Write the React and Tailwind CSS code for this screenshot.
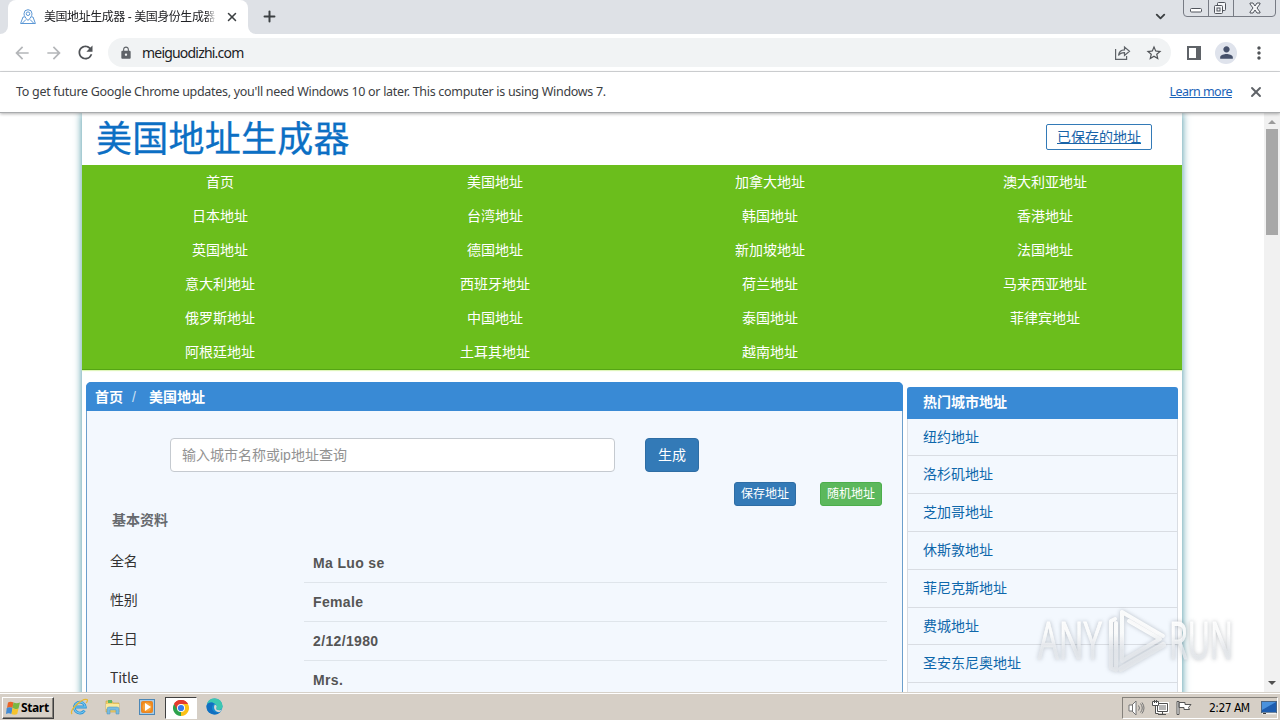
import { ChevronDown, Plus, X } from 'lucide-react'
import { MdArrowBack, MdArrowForward, MdLock, MdMoreVert, MdPerson, MdRefresh, MdStarBorder } from 'react-icons/md'

const navLinks = [
  '首页', '美国地址', '加拿大地址', '澳大利亚地址',
  '日本地址', '台湾地址', '韩国地址', '香港地址',
  '英国地址', '德国地址', '新加坡地址', '法国地址',
  '意大利地址', '西班牙地址', '荷兰地址', '马来西亚地址',
  '俄罗斯地址', '中国地址', '泰国地址', '菲律宾地址',
  '阿根廷地址', '土耳其地址', '越南地址',
]

const cities = ['纽约地址', '洛杉矶地址', '芝加哥地址', '休斯敦地址', '菲尼克斯地址', '费城地址', '圣安东尼奥地址']

const profile = [
  { label: '全名', value: 'Ma Luo se' },
  { label: '性别', value: 'Female' },
  { label: '生日', value: '2/12/1980' },
  { label: 'Title', value: 'Mrs.' },
]

function App() {
  return (
    <div className="relative flex h-[720px] w-[1280px] flex-col overflow-hidden bg-white font-['Liberation_Sans','Noto_Sans_CJK_SC',sans-serif] text-sm">
      <TabStrip />
      <Toolbar />
      <InfoBar />
      <div className="flex min-h-0 flex-1">
        <main className="min-w-0 flex-1 overflow-hidden">
          <Page />
        </main>
        <Scrollbar />
      </div>
      <Taskbar />
      <Watermark />
    </div>
  )
}

function TabStrip() {
  return (
    <div className="relative flex h-[34px] shrink-0 bg-[#dee1e6]">
      <div className="flex w-2 items-end bg-white">
        <div className="h-full w-2 rounded-br-lg bg-[#dee1e6]" />
      </div>
      <div className="flex w-[240px] items-center rounded-t-lg bg-white pl-3">
        <SiteIcon />
        <div className="ml-2 h-5 w-[172px] whitespace-nowrap text-xs leading-5 tracking-[-0.45px] text-[#202124] [mask-image:linear-gradient(to_right,black_94%,transparent)]">
          美国地址生成器 - 美国身份生成器 -
        </div>
        <X size={14} strokeWidth={2.6} className="ml-[9px] text-[#3c4043]" />
      </div>
      <div className="flex w-2 items-end bg-white">
        <div className="h-full w-2 rounded-bl-lg bg-[#dee1e6]" />
      </div>
      <Plus size={17} strokeWidth={2.8} className="ml-[5px] mt-[8px] text-[#3c4043]" />
      <ChevronDown size={15} strokeWidth={3} className="ml-auto mr-[15px] mt-[9px] text-[#3c4043]" />
      <svg width="97" height="17" viewBox="0 0 97 17" fill="none" stroke="#777b84">
        <path d="M.5 0v13q0 3.500 3.500 3.500h85q3.500 0 3.500-3.500V0M25.500 0v16M50.500 0v16" />
        <rect x="7.500" y="8.500" width="11" height="3.500" rx="1" fill="#fff" stroke="#50545c" />
        <g fill="#f5f6f8" stroke="#50545c">
          <rect x="34.500" y="2.500" width="8" height="8" rx="1" />
          <rect x="31.500" y="5.500" width="8" height="8" rx="1" />
          <rect x="34" y="8" width="3" height="3" />
          <path d="M67 3h3l2 3 2-3h3v1l-3 4 3 4v1h-3l-2-3-2 3h-3v-1l3-4-3-4z" />
        </g>
      </svg>
    </div>
  )
}

function SiteIcon() {
  return (
    <svg width="16" height="16" viewBox="0 0 16 16" fill="none" stroke="#5b97d5" strokeWidth="1">
      <path d="M8 11.500C5.500 8.800 4 7 4 4.700a4 4 0 0 1 8 0C12 7 10.500 8.800 8 11.500z" />
      <circle cx="8" cy="4.700" r="1.800" />
      <path d="M4.500 8H3L.6 14.500h14.800L13 8h-1.500M2.500 14l3.500-3.500M13.500 14 10 10.500" />
    </svg>
  )
}

function Toolbar() {
  return (
    <div className="flex h-[38px] shrink-0 items-center border-b border-[#d5d7da] bg-white">
      <MdArrowBack size={20} className="ml-3 text-[#b4b6b9]" />
      <MdArrowForward size={20} className="ml-3 text-[#b4b6b9]" />
      <MdRefresh size={21} className="ml-[11px] text-[#505357]" />
      <div className="ml-3 flex h-[29px] w-[1063px] items-center rounded-full bg-[#f1f3f4]">
        <MdLock size={14} className="ml-[11px] text-[#5f6368]" />
        <span className="ml-[9px] font-['Noto_Sans',sans-serif] text-[14px] leading-5 tracking-[-0.8px] text-[#202124]">meiguodizhi.com</span>
        <svg width="17" height="16" viewBox="0 0 17 16" fill="none" stroke="#5f6368" strokeWidth="1.200" className="ml-auto">
          <path d="M1.600 4v10.400h11V11M4.500 10.500c.5-4 2.600-5.700 6-5.700V2l5 4.300-5 4.200V7.700c-2.700 0-4.700.6-6 2.800z" />
        </svg>
        <MdStarBorder size={18} className="ml-[14px] mr-[8px] text-[#505357]" />
      </div>
      <svg width="14" height="14" viewBox="0 0 14 14" className="ml-4">
        <path d="M0 0h14v14H0zM2 2v10h7V2z" fill="#5f6368" fillRule="evenodd" />
      </svg>
      <div className="ml-[14px] flex h-[22px] w-[22px] items-center justify-center rounded-full bg-[#dfe3ec]">
        <MdPerson size={19} className="text-[#46516b]" />
      </div>
      <MdMoreVert size={20} className="ml-[12px] text-[#505357]" />
    </div>
  )
}

function InfoBar() {
  return (
    <div className="relative z-10 flex h-[41px] shrink-0 items-center border-b border-[#a9abad] bg-white pl-4 font-['Noto_Sans',sans-serif] text-[12.5px] text-[#3c4043] shadow-[0_1px_3px_rgba(0,0,0,0.3)]">
      <span className="whitespace-nowrap tracking-[-0.295px]">To get future Google Chrome updates, you'll need Windows 10 or later. This computer is using Windows 7.</span>
      <span className="ml-auto whitespace-nowrap tracking-[-0.55px] text-[#1a62b8] underline">Learn more</span>
      <X size={16} strokeWidth={2.8} className="ml-4 mr-4 text-[#5f6368]" />
    </div>
  )
}

function Page() {
  return (
    <div className="mx-auto h-[600px] w-[1100px] bg-white shadow-[0_0_8px_#3f8f9f]">
      <header className="flex h-[52px] justify-between pl-[14px] pr-[30px]">
        <h1 className="text-[36px] leading-[54px] tracking-[0.25px] text-[#0c6fc4] [-webkit-text-stroke:0.3px_#0c6fc4]">美国地址生成器</h1>
        <a className="mt-[11px] h-[26px] w-[106px] rounded-xs border border-[#337ab7] text-center leading-[25px] text-[#1763a8] underline">已保存的地址</a>
      </header>
      <nav className="grid h-[205px] grid-cols-4 content-start border-b border-[#55a514] bg-[#6bbe1c] text-center text-white shadow-[0_1px_1px_#dff5ba]">
        {navLinks.map((link) => (
          <a key={link} className="h-[34px] pl-px leading-[34px]">{link}</a>
        ))}
      </nav>
      <div className="flex items-start gap-1 pl-1 pt-3">
        <AddressPanel />
        <CityList />
      </div>
    </div>
  )
}

function AddressPanel() {
  return (
    <section className="h-[400px] w-[817px] rounded-t-[5px] border border-[#6c9fcc] bg-[#f3f8fe]">
      <div className="-mx-px -mt-px flex h-[29px] items-center rounded-t-[5px] bg-[#398ad5] pl-[9px] font-bold text-white">
        <span>首页</span>
        <span className="ml-[9px] mr-[13px] font-normal text-[#cce0f3]">/</span>
        <span>美国地址</span>
      </div>
      <div className="ml-[83px] mt-[27px] flex">
        <input
          placeholder="输入城市名称或ip地址查询"
          className="h-[34px] w-[445px] rounded border border-[#c5cad0] bg-white px-[11px] text-sm placeholder:text-[#929292]"
        />
        <button className="ml-[30px] h-[34px] w-[54px] rounded border border-[#2e6da4] bg-[#337ab7] text-sm text-white">生成</button>
      </div>
      <div className="mr-5 mt-[10px] flex justify-end gap-6 text-xs text-white">
        <button className="h-6 w-[62px] rounded-[3px] border border-[#2e6da4] bg-[#337ab7]">保存地址</button>
        <button className="h-6 w-[62px] rounded-[3px] border border-[#4cae4c] bg-[#5cb85c]">随机地址</button>
      </div>
      <h2 className="ml-[25px] mt-1 h-5 font-bold leading-5 text-[#666a6e]">基本资料</h2>
      <dl className="mr-[15px] mt-[14px]">
        {profile.map((item) => (
          <div key={item.label} className="flex h-[39px]">
            <dt className="w-[217px] pl-[23px] font-['Noto_Sans_CJK_SC',sans-serif] leading-[33px] tracking-[-0.2px] text-[#333]">{item.label}</dt>
            <dd className="flex-1 border-b border-[#dfe5eb] pl-[9px] font-bold leading-[39px] tracking-[0.35px] text-[#555]">{item.value}</dd>
          </div>
        ))}
      </dl>
    </section>
  )
}

function CityList() {
  return (
    <aside className="mt-[4.6px] w-[271px] rounded-t border-x border-[#d9dde3] bg-[#f3f8fe] pb-4">
      <h3 className="-mx-px h-8 rounded-t-[3px] bg-[#398ad5] pl-4 font-bold leading-[31px] text-white">热门城市地址</h3>
      {cities.map((city) => (
        <a key={city} className="block h-[37.8px] border-b border-[#d9dde3] pl-[15px] leading-[37px] text-[#0e67ab]">{city}</a>
      ))}
    </aside>
  )
}

function Scrollbar() {
  return (
    <div className="flex w-4 flex-col items-center justify-between bg-[#f1f1f1]">
      <div className="flex flex-col items-center">
        <span className="mt-[7px] h-0 w-0 border-x-4 border-b-4 border-x-transparent border-b-[#9b9b9b]" />
        <span className="mt-[5px] h-[106px] w-3 bg-[#a8a8a8]" />
      </div>
      <span className="mb-[7px] h-0 w-0 border-x-4 border-t-4 border-x-transparent border-t-[#505050]" />
    </div>
  )
}

function Taskbar() {
  return (
    <footer className="relative z-10 flex h-[28px] shrink-0 items-center border-t border-[#d6d1c9] bg-[#d6cfc6] pl-[2px] pr-[2px] shadow-[inset_0_1px_0_white] font-['DejaVu_Sans_Condensed','DejaVu_Sans',sans-serif] text-xs text-black">
      <div className="mt-0.5 flex h-[22px] w-[52px] items-center border border-b-[#404040] border-l-white border-r-[#404040] border-t-white pl-[2px] shadow-[inset_-1px_-1px_0_#85817b]">
        <WindowsFlag />
        <span className="font-['Open_Sans','DejaVu_Sans',sans-serif] text-[12px] font-bold leading-4 tracking-[-0.4px]">Start</span>
      </div>
      <svg className="ml-[16px]" width="19" height="18" viewBox="0 0 19 18" fill="none">
        <path d="M14.500 12.500a5.500 5.500 0 1 1 .8-3.500H5" stroke="#2f94d6" strokeWidth="2.800" />
        <path d="M14.500 12.500a5.500 5.500 0 1 1 .8-3.500H5" stroke="#75c9f1" strokeWidth="1.100" />
        <path d="M2 16C-1 12 12 0 17 1.500c1 .7.300 2-.7 3.500" stroke="#e8b931" strokeWidth="1.300" />
      </svg>
      <svg className="ml-[15px]" width="18" height="18" viewBox="0 0 18 18">
        <path d="M2 3h6l1 2h6v9H2z" fill="#efce69" stroke="#c8a342" strokeWidth=".6" />
        <path d="M4 2h4v3H4z" fill="#61b561" />
        <path d="M2 6h13v5H2z" fill="#fae99c" />
        <path d="M3 16v-5q0-2 2-2h8q2 0 2 2v5h-3v-4H6v4z" fill="#79bce0" stroke="#4b93bd" strokeWidth=".5" />
      </svg>
      <svg className="ml-[17px]" width="16" height="16" viewBox="0 0 16 16">
        <rect x=".5" y=".5" width="15" height="15" fill="#a7cce6" stroke="#4c87b6" />
        <rect x="2.500" y="2.500" width="11" height="11" rx="1" fill="#f08a1a" stroke="#e58428" />
        <circle cx="8" cy="8" r="4.500" fill="#f7a33a" />
        <path d="M6 4 12 8 6 12z" fill="#fff" />
      </svg>
      <div className="ml-[10px] mt-0.5 flex h-[22px] w-8 items-center justify-center border border-b-white border-l-[#404040] border-r-white border-t-[#404040] bg-white">
        <ChromeLogo />
      </div>
      <svg className="ml-[9px]" width="17" height="17" viewBox="0 0 17 17">
        <circle cx="8.500" cy="8.500" r="8" fill="#168bd0" />
        <path d="M1 6a8 8 0 0 1 15.400 1c.5 3-1 5-4 5-2 0-3-1-2-2.200C11.500 7 8 4 4.500 4.500 2.500 4.800 1 6 1 6z" fill="#3cc7b1" />
        <path d="M.7 7C3 3.500 7 4 8.500 6 6 7 5 10 7 12.500c2 2.500 5 2.500 7.500 1.300A8 8 0 0 1 .7 7z" fill="#126fc0" />
        <path d="M8.800 6.500c2 .7 2.300 2.200 1.400 3.600-.4 1.400 1 2.200 3.200 2.200 1 0 2-.5 2.500-1 0 0-.5 1.600-2 2.800-4 .5-7.400-3.600-5.100-7.600z" fill="#d6d8d4" />
      </svg>
      <div className="ml-auto mt-0.5 flex h-[22px] w-[156px] items-center border border-b-white border-l-[#85817b] border-r-white border-t-[#85817b] pl-[5px]">
        <svg width="17" height="16" viewBox="0 0 17 16" fill="none" stroke="#757575">
          <path d="M1 5h3l4-4v14l-4-4H1zM4.500 5v6" fill="#fff" />
          <path d="M10.500 5.500q2 2.500 0 5M12.500 3.500q3.500 4.500 0 9M14 2.500q4 5.500 0 11" />
        </svg>
        <svg className="ml-[7px]" width="17" height="16" viewBox="0 0 17 16" fill="none" stroke="#505050">
          <path d="M5.500 3.500h10v8h-10z" fill="#b5b5b5" stroke="#fff" strokeWidth="3" />
          <path d="M5.500 3.500h10v8h-10zM10.500 12v2.500M6 14.500h8M3.500 5v8.500h3" />
          <path d="M.5 1.500h6v4h-6zM2.500 0v3M4.500 0v3" fill="#fff" />
        </svg>
        <svg className="ml-[7px]" width="16" height="16" viewBox="0 0 16 16" fill="#fff" stroke="#555">
          <path d="M1 1.500h2v13H1zM3 2.500h6v2h6l-2.500 3 1 2H8v-2H3z" />
        </svg>
        <span className="ml-[17px] whitespace-nowrap text-[12px] leading-4 tracking-[-0.55px]">2:27 AM</span>
        <svg className="ml-auto" width="16" height="14" viewBox="0 0 16 14">
          <rect x=".5" y=".5" width="15" height="11" fill="#1e5daf" stroke="#4a6583" />
          <path d="M1 1h14L1 9z" fill="#4a92dd" />
          <path d="M1 12.500h14" stroke="#f2f2f2" strokeWidth="1.500" />
          <path d="M2 12.500h3" stroke="#3c3c3c" />
        </svg>
      </div>
    </footer>
  )
}

function WindowsFlag() {
  return (
    <svg width="16" height="16" viewBox="0 0 16 16" className="shrink-0">
      <path d="M3 2.500q2.500-1.500 5.500 0L7.500 8q-2.500-1.500-5.500 0z" fill="#ea6426" />
      <path d="M8.500 2.500q3 1.500 6.500 0l-1.500 6Q10.500 10 7.500 8z" fill="#79b742" />
      <path d="M1.700 8q3-1.500 5.800 0l-1 6q-2.800-1.500-5.500 0z" fill="#438bd3" />
      <path d="M7.500 8q3 2 6 .5l-1.300 5.500q-2.700 1.500-5.700 0z" fill="#f5c32c" />
    </svg>
  )
}

function ChromeLogo() {
  return (
    <svg width="16" height="16" viewBox="0 0 16 16">
      <path d="M8 8 1.070 4A8 8 0 0 1 14.930 4z" fill="#e33b2e" />
      <path d="M8 8 14.930 4A8 8 0 0 1 8 16z" fill="#fbc116" />
      <path d="M8 8v8A8 8 0 0 1 1.070 4z" fill="#2da24c" />
      <path d="M8 4h6.930l-3.500 6z" fill="#fbc116" />
      <path d="M8 4h6.930A8 8 0 0 0 1.070 4l3.470 6z" fill="#e33b2e" />
      <circle cx="8" cy="8" r="4" fill="#fff" />
      <circle cx="8" cy="8" r="3.100" fill="#367bec" />
    </svg>
  )
}

function Watermark() {
  return (
    <svg
      className="pointer-events-none absolute left-[1032px] top-[602px] z-20 drop-shadow-[0_0_2px_rgba(80,90,100,0.4)]"
      width="208"
      height="78"
      viewBox="0 0 208 78"
      fill="none"
    >
      <defs>
        <linearGradient id="fade" x1="0" y1="0" x2="0" y2="78" gradientUnits="userSpaceOnUse">
          <stop offset="0.4" stopColor="#fff" stopOpacity="0.9" />
          <stop offset="0.62" stopColor="#e6e9ed" stopOpacity="0.75" />
        </linearGradient>
      </defs>
      <g fill="url(#fade)" stroke="url(#fade)" strokeWidth="0.8" fontFamily="Open Sans, sans-serif" fontSize="51">
        <text x="6" y="57" textLength="64" lengthAdjust="spacingAndGlyphs">ANY</text>
        <text x="137" y="57" textLength="64" lengthAdjust="spacingAndGlyphs">RUN</text>
      </g>
      <g stroke="url(#fade)" strokeWidth="4" strokeLinecap="round" strokeLinejoin="round">
        <path d="M83 17l-4 2v47l5 2V21" />
        <path d="M131 34 90 10v49l38-22-31-18" />
        <path d="M89 67l42-24" strokeWidth="6" />
      </g>
    </svg>
  )
}

export default App
